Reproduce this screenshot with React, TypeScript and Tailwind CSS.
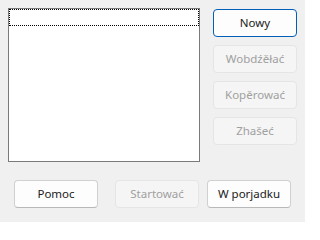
const font = { fontFamily: '"Noto Sans", "Open Sans", sans-serif' };

function Btn({
  label,
  disabled = false,
  primary = false,
  className = '',
}: {
  label: string;
  disabled?: boolean;
  primary?: boolean;
  className?: string;
}) {
  const look = primary
    ? 'border-[#005fb8] bg-[#fdfdfd] text-[#1a1a1a]'
    : disabled
      ? 'border-[#e5e5e5] bg-[#f5f5f5] text-[#a0a0a0]'
      : 'border-[#d0d0d0] border-b-[#b8b8b8] bg-[#fdfdfd] text-[#1a1a1a]';
  return (
    <button
      type="button"
      disabled={disabled}
      className={`flex h-[28px] w-[84px] items-center justify-center rounded-[4px] border text-[11.5px] leading-none ${look} ${className}`}
    >
      {label}
    </button>
  );
}

export default function App() {
  return (
    <div className="h-[222px] w-[305px] bg-[#f0f0f0] pl-2 pt-2" style={font}>
      <div className="flex">
        <div className="h-[154px] w-[192px] border border-[#7a7a7a] bg-white">
          <div className="h-[17px] w-full border border-dotted border-black" />
        </div>
        <div className="ml-[13px] mt-[1px] flex flex-col gap-2">
          <Btn label="Nowy" primary />
          <Btn label="Wobdźěłać" disabled />
          <Btn label="Kopěrować" disabled />
          <Btn label="Zhašeć" disabled />
        </div>
      </div>
      <div className="mt-[18px] flex pl-[6px]">
        <Btn label="Pomoc" />
        <Btn label="Startować" disabled className="ml-[17px]" />
        <Btn label="W porjadku" className="ml-2" />
      </div>
    </div>
  );
}
